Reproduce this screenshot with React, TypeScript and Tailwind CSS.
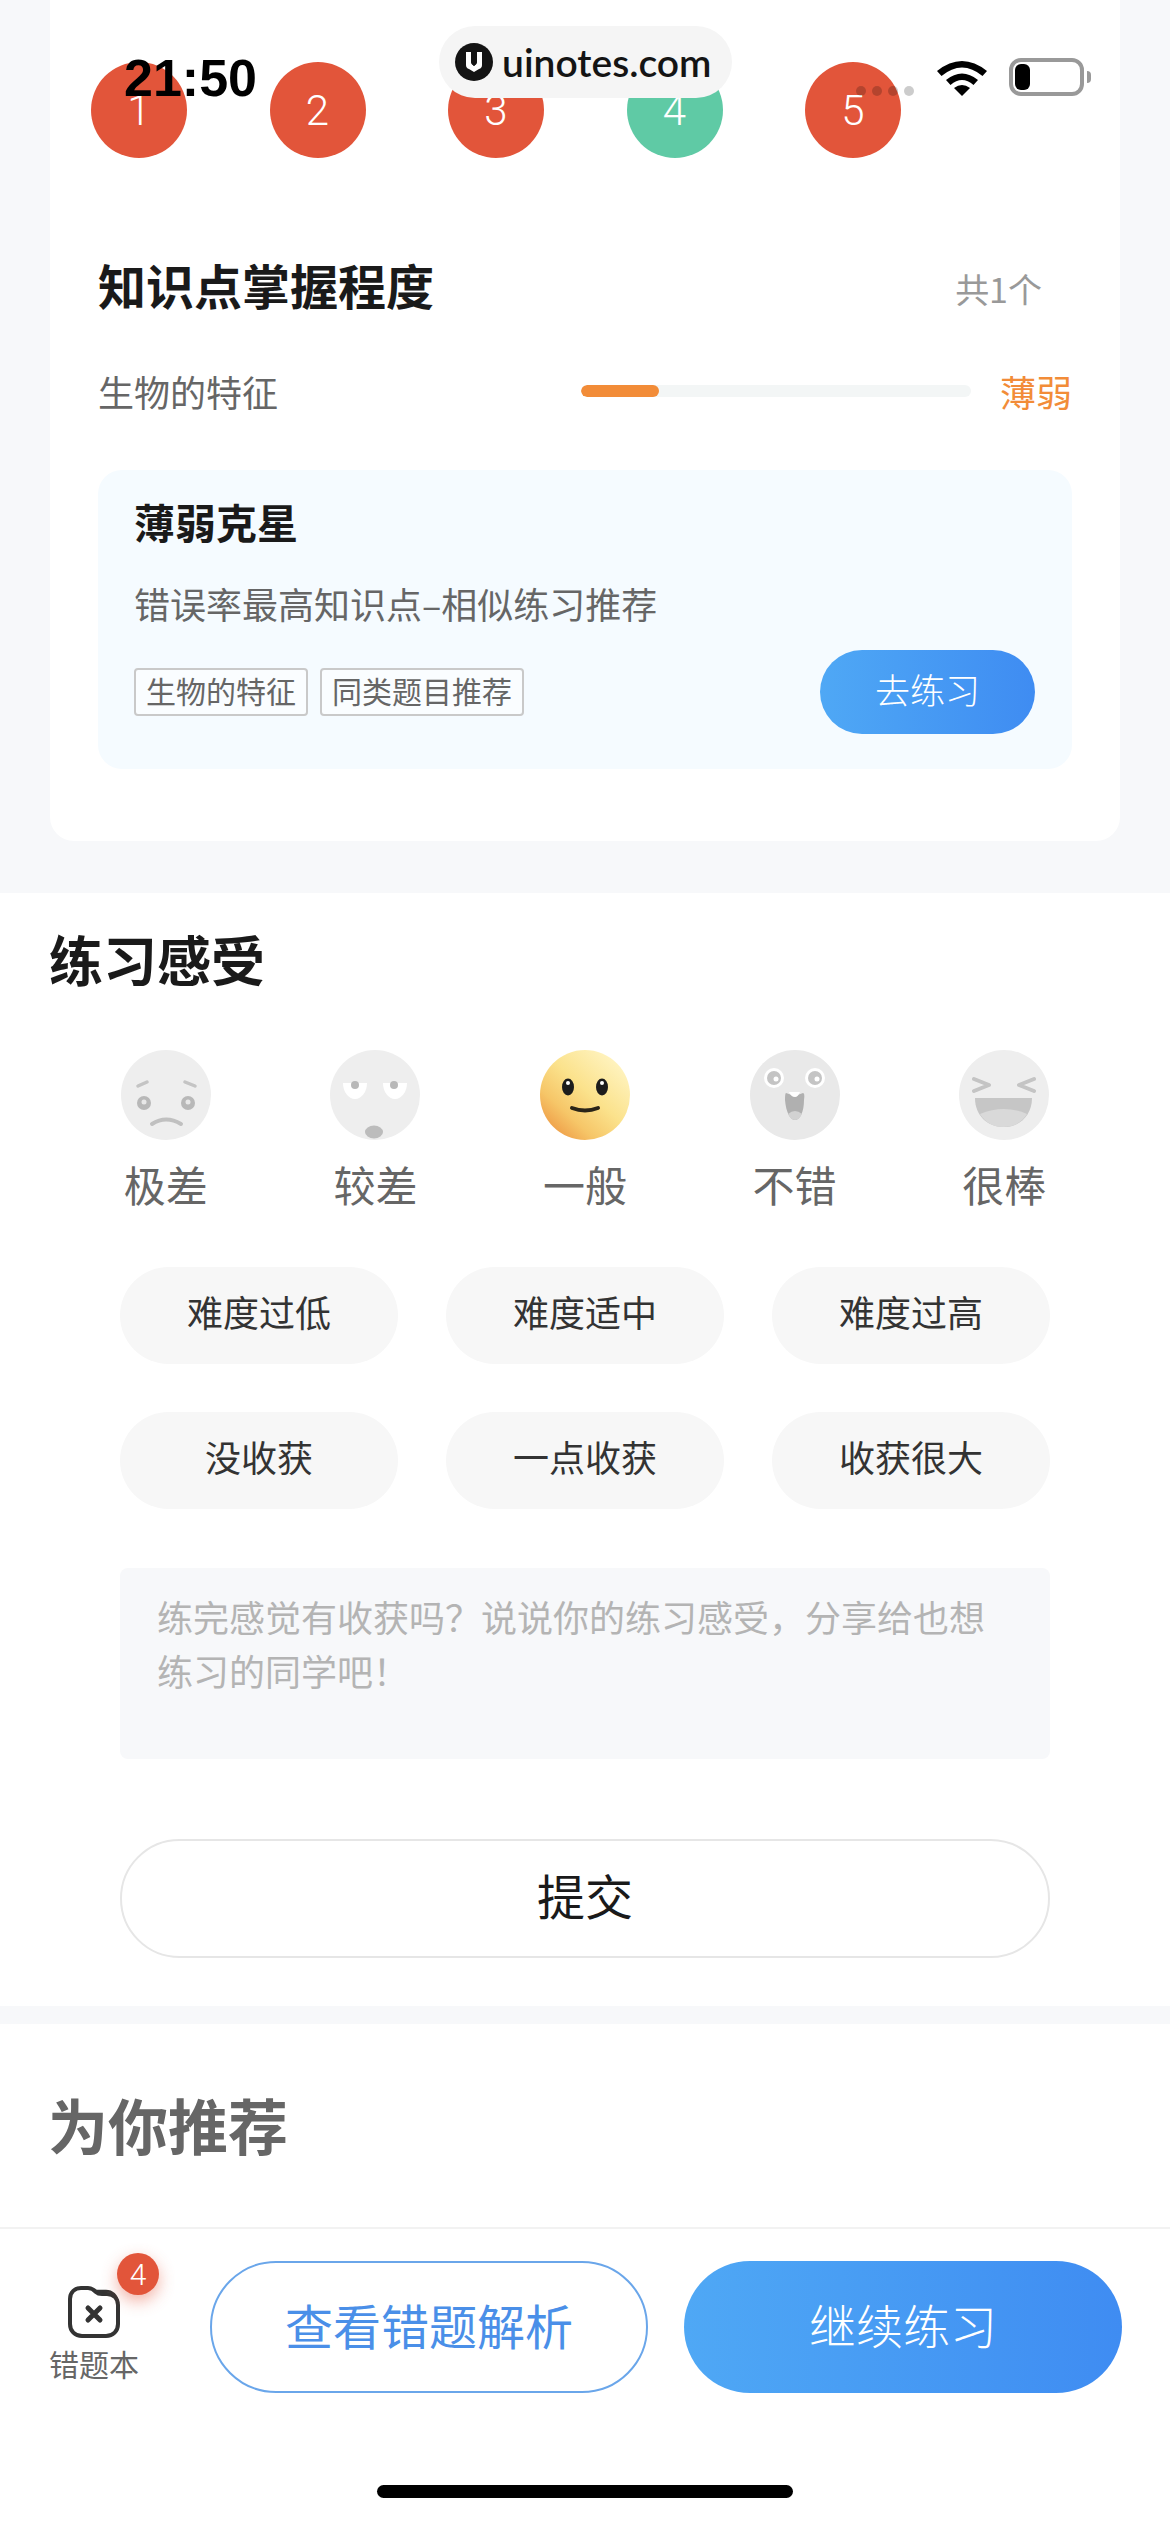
import React from 'react';

const CJK = '"Noto Sans CJK SC", sans-serif';

const rounds = [
    { n: 1, green: false },
    { n: 2, green: false },
    { n: 3, green: false },
    { n: 4, green: true },
    { n: 5, green: false },
];

function FaceBad() {
    return (
        <svg width="90" height="90" viewBox="0 0 90 90">
            <circle cx="45" cy="45" r="45" fill="#eeeeee" />
            <path d="M17 36l9-4M64 32l10 4" stroke="#c4c4c4" strokeWidth="3.500" strokeLinecap="round" fill="none" />
            <circle cx="23" cy="53" r="7" fill="#b8b8b8" />
            <circle cx="67" cy="53" r="7" fill="#b8b8b8" />
            <circle cx="23" cy="52" r="2.500" fill="#e8e8e8" />
            <circle cx="67" cy="52" r="2.500" fill="#e8e8e8" />
            <path d="M31 74Q45 65 60 74" stroke="#c0c0c0" strokeWidth="4" strokeLinecap="round" fill="none" />
        </svg>
    );
}

function FacePoor() {
    return (
        <svg width="90" height="90" viewBox="0 0 90 90">
            <circle cx="45" cy="45" r="45" fill="#eeeeee" />
            <path d="M13 33h24a12 16 0 0 1-24 0zM53 33h24a12 16 0 0 1-24 0z" fill="#fff" />
            <circle cx="25" cy="35" r="4" fill="#b8b8b8" />
            <circle cx="64" cy="35" r="4" fill="#b8b8b8" />
            <ellipse cx="44" cy="82" rx="9" ry="6.500" fill="#bcbcbc" />
        </svg>
    );
}

function FaceOk() {
    return (
        <svg width="90" height="90" viewBox="0 0 90 90">
            <defs>
                <linearGradient id="okFace" x1="0.85" y1="0.08" x2="0.1" y2="0.9">
                    <stop offset="0" stopColor="#fff4c2" />
                    <stop offset="0.45" stopColor="#fbe28c" />
                    <stop offset="0.75" stopColor="#f6c668" />
                    <stop offset="1" stopColor="#ee9a45" />
                </linearGradient>
            </defs>
            <circle cx="45" cy="45" r="45" fill="url(#okFace)" />
            <ellipse cx="28" cy="37" rx="6" ry="8.500" fill="#1c1c1c" />
            <ellipse cx="62" cy="37" rx="6" ry="8.500" fill="#1c1c1c" />
            <circle cx="28" cy="33" r="2" fill="#fff" />
            <circle cx="62" cy="33" r="2" fill="#fff" />
            <path d="M32 58Q45 63 58 58" stroke="#2a2418" strokeWidth="4" strokeLinecap="round" fill="none" />
        </svg>
    );
}

function FaceGood() {
    return (
        <svg width="90" height="90" viewBox="0 0 90 90">
            <circle cx="45" cy="45" r="45" fill="#e9e9e9" />
            <circle cx="24" cy="28" r="10" fill="#fff" />
            <circle cx="65" cy="28" r="10" fill="#fff" />
            <circle cx="24" cy="28" r="7" fill="#c4c4c4" />
            <circle cx="65" cy="28" r="7" fill="#c4c4c4" />
            <circle cx="26" cy="29" r="2.500" fill="#fff" />
            <circle cx="67" cy="29" r="2.500" fill="#fff" />
            <path d="M36 43Q45 47 53 43Q55 43 54 50C54 62 50 70 45 70C40 70 36 62 35 50Q35 43 36 43z" fill="#b0b0b0" />
            <path d="M38 64Q45 58 52 64Q49 70 45 70Q41 70 38 64z" fill="#d2d2d2" />
            <path d="M39 42h11Q48 47 45 47Q41 47 39 42z" fill="#fff" />
        </svg>
    );
}

function FaceGreat() {
    return (
        <svg width="90" height="90" viewBox="0 0 90 90">
            <circle cx="45" cy="45" r="45" fill="#eeeeee" />
            <path d="M15 29l15 6-15 6M75 29l-15 6 15 6" stroke="#c4c4c4" strokeWidth="4" strokeLinecap="round" strokeLinejoin="round" fill="none" />
            <path d="M16 48h57c0 17-12 29-28.500 29S16 65 16 48z" fill="#c6c6c6" />
            <path d="M21 64Q45 54 68 64Q60 77 44.500 77Q29 77 21 64z" fill="#d9d9d9" />
        </svg>
    );
}

const moods = [
    { label: '极差', face: <FaceBad /> },
    { label: '较差', face: <FacePoor /> },
    { label: '一般', face: <FaceOk /> },
    { label: '不错', face: <FaceGood /> },
    { label: '很棒', face: <FaceGreat /> },
];

const pillRows = [
    ['难度过低', '难度适中', '难度过高'],
    ['没收获', '一点收获', '收获很大'],
];

function StatusOverlay() {
    return (
        <>
            <div className="absolute left-[124px] top-[52px] text-[52px] leading-[52px] font-bold text-black" style={{ fontFamily: '"Liberation Sans", sans-serif' }}>
                21:50
            </div>
            <div className="absolute left-[439px] top-[26px] w-[293px] h-[72px] rounded-[36px] bg-[#f5f5f5] flex items-center pl-[16px]">
                <svg width="38" height="38" viewBox="0 0 38 38">
                    <circle cx="19" cy="19" r="19" fill="#141414" />
                    <path d="M11 9h5v10q0 2 3 4q3-2 3-4V9h5v13q0 3-3 4l-5 3-5-3q-3-1-3-4z" fill="#fff" />
                    <path d="M16 9h6v10q0 2-3 4q-3-2-3-4z" fill="#141414" />
                </svg>
                <span className="ml-[9px] text-[39px] leading-none font-semibold text-[#141414]" style={{ fontFamily: 'Lato, sans-serif' }}>
                    uinotes.com
                </span>
            </div>
            <div className="absolute left-[856px] top-[86px] flex gap-[6px]">
                <span className="w-[10px] h-[10px] rounded-full bg-black/20" />
                <span className="w-[10px] h-[10px] rounded-full bg-black/20" />
                <span className="w-[10px] h-[10px] rounded-full bg-black/20" />
                <span className="w-[10px] h-[10px] rounded-full bg-black/20" />
            </div>
            <svg className="absolute left-[937px] top-[59px]" width="50" height="37" viewBox="0 0 50 37">
                <path d="M0 12Q25-8 50 12l-4.500 5Q25 0 4.500 17z" fill="#000" />
                <path d="M9 21Q25 8 41 21l-4.500 5Q25 16 13.500 26z" fill="#000" />
                <path d="M17 29Q25 23 33 29l-8 8z" fill="#000" />
            </svg>
            <div className="absolute left-[1009px] top-[58px] w-[75px] h-[38px] rounded-[12px] border-[4px] border-[#999] p-[2px]">
                <div className="w-[15px] h-full rounded-[6px] bg-black" />
            </div>
            <div className="absolute left-[1087px] top-[71px] w-[4px] h-[12px] rounded-r-[4px] bg-[#999]" />
        </>
    );
}

export default function App() {
    return (
        <div className="relative w-[1170px] h-[2532px] overflow-hidden bg-[#f7f8fa]" style={{ fontFamily: CJK }}>
            {/* Top card */}
            <div className="mx-[50px] h-[841px] rounded-b-[24px] bg-white overflow-hidden">
                <div className="flex gap-[82.5px] pl-[41px] pt-[62px]">
                    {rounds.map((r) => (
                        <div
                            key={r.n}
                            className={`w-[96px] h-[96px] rounded-full flex items-center justify-center text-white text-[42px] font-light ${r.green ? 'bg-[#5fcaa5]' : 'bg-[#e2553a]'}`}
                            style={{ fontFamily: 'Roboto, sans-serif' }}
                        >
                            {r.n}
                        </div>
                    ))}
                </div>

                <div className="flex items-start justify-between h-[60px] pl-[48px] pr-[78px] mt-[96px]">
                    <span className="text-[48px] leading-[60px] font-bold text-[#1a1a1a]">知识点掌握程度</span>
                    <span className="text-[34px] leading-[70px] text-[#999]">共1个</span>
                </div>

                <div className="flex items-center pl-[48px] mt-[47px] h-[60px]">
                    <span className="w-[483px] text-[36px] text-[#666]">生物的特征</span>
                    <div className="w-[390px] h-[12px] rounded-full bg-[#f3f6f6] overflow-hidden">
                        <div className="w-[78px] h-full rounded-full bg-[#f28c38]" />
                    </div>
                    <span className="ml-[29px] text-[36px] text-[#f28c38]">薄弱</span>
                </div>

                {/* Weak spot card */}
                <div className="mx-[48px] mt-[49px] h-[299px] rounded-[24px] bg-[#f5fbff] pl-[36px] pr-[37px] pt-[26px]">
                    <div className="text-[41px] leading-[50px] font-bold text-[#1a1a1a]">薄弱克星</div>
                    <div className="mt-[32px] text-[36px] leading-[50px] text-[#666]">错误率最高知识点–相似练习推荐</div>
                    <div className="flex items-center justify-between mt-[22px]">
                        <div className="flex gap-[12px]">
                            <span className="h-[48px] px-[10px] rounded-[4px] border-2 border-[#c9c9c9] bg-white/50 text-[30px] leading-[40px] text-[#666]">生物的特征</span>
                            <span className="h-[48px] px-[10px] rounded-[4px] border-2 border-[#c9c9c9] bg-white/50 text-[30px] leading-[40px] text-[#666]">同类题目推荐</span>
                        </div>
                        <button className="w-[215px] h-[84px] pb-[6px] rounded-full bg-gradient-to-r from-[#4fa8f5] to-[#3f8cf2] text-white text-[35px] font-light">
                            去练习
                        </button>
                    </div>
                </div>
            </div>

            {/* Feedback */}
            <div className="mt-[52px] h-[1113px] bg-white pt-[33px]">
                <div className="pl-[49px] text-[54px] leading-[66px] font-bold text-[#1a1a1a]">练习感受</div>
                <div className="grid grid-cols-5 px-[61px] mt-[58px]">
                    {moods.map((m) => (
                        <div key={m.label} className="flex flex-col items-center">
                            {m.face}
                            <span className="mt-[18px] text-[42px] leading-[52px] text-[#666]">{m.label}</span>
                        </div>
                    ))}
                </div>

                <div className="flex flex-col gap-[48px] mt-[57px] px-[120px]">
                    {pillRows.map((row) => (
                        <div key={row[0]} className="flex justify-between">
                            {row.map((p) => (
                                <div key={p} className="w-[278px] h-[97px] pb-[9px] rounded-full bg-[#f7f7f7] flex items-center justify-center text-[36px] text-[#333]">
                                    {p}
                                </div>
                            ))}
                        </div>
                    ))}
                </div>

                <div className="mx-[120px] mt-[59px] h-[191px] rounded-[8px] bg-[#f7f8fa] px-[37px] pt-[21px] text-[36px] leading-[54px] text-[#b4b4b4]">
                    练完感觉有收获吗？说说你的练习感受，分享给也想练习的同学吧！
                </div>

                <button className="block mx-[120px] mt-[80px] w-[930px] h-[119px] pb-[10px] rounded-full border-2 border-[#e6e6e6] bg-white text-[48px] text-[#1a1a1a]">
                    提交
                </button>
            </div>

            {/* Recommend */}
            <div className="mt-[18px] h-[203px] bg-white pl-[48px] pt-[65px]">
                <div className="text-[60px] leading-[70px] font-bold text-[#666]">为你推荐</div>
            </div>

            {/* Bottom bar */}
            <div className="h-[305px] bg-white border-t-2 border-[#f2f2f2]">
                <div className="flex items-start pt-[32px]">
                    <div className="relative w-[210px] h-[132px] flex flex-col items-center pt-[25px]">
                        <svg className="-ml-[22px]" width="52" height="52" viewBox="0 0 52 52">
                            <path d="M2 13C2 6 7 2 13 2h7c4 0 6 2 8 4s3 2 6 2h5c7 0 11 5 11 11v19c0 7-5 12-12 12H14C7 50 2 45 2 38z" fill="none" stroke="#333" strokeWidth="4" />
                            <path d="M27 5h11c6 0 11 4 12 12" fill="none" stroke="#333" strokeWidth="2.500" />
                            <path d="M20 22l12 12M32 22L20 34" stroke="#333" strokeWidth="5" strokeLinecap="round" />
                        </svg>
                        <span className="-ml-[22px] mt-[8px] text-[30px] leading-[34px] text-[#666] whitespace-nowrap">错题本</span>
                        <div
                            className="absolute left-[117px] top-[-8px] w-[42px] h-[42px] rounded-full bg-[#e2553a] shadow-[0_6px_16px_rgba(226,85,58,0.45)] flex items-center justify-center text-white text-[30px] font-light"
                            style={{ fontFamily: 'Roboto, sans-serif' }}
                        >
                            4
                        </div>
                    </div>
                    <button className="w-[438px] h-[132px] pb-[6px] rounded-full border-2 border-[#6aa6ea] bg-white text-[48px] text-[#4a8fe8]">
                        查看错题解析
                    </button>
                    <button className="ml-[36px] w-[438px] h-[132px] pb-[6px] rounded-full bg-gradient-to-r from-[#4fa8f5] to-[#3f8cf2] text-white text-[47px] font-light">
                        继续练习
                    </button>
                </div>
                <div className="mx-auto mt-[92px] w-[416px] h-[13px] rounded-full bg-black" />
            </div>

            <StatusOverlay />
        </div>
    );
}
